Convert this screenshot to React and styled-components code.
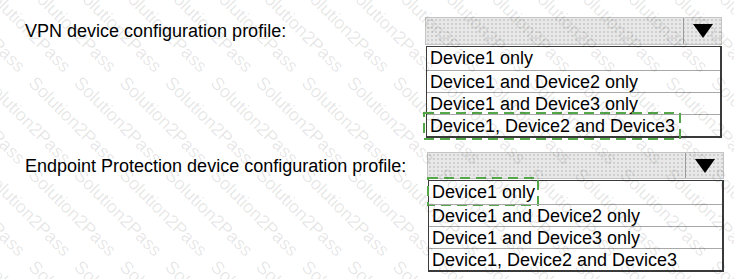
import React from "react";
import styled, { createGlobalStyle } from "styled-components";

const GlobalStyle = createGlobalStyle`
  html, body {
    margin: 0;
    padding: 0;
    background: #ffffff;
  }
  body {
    font-family: "Liberation Sans", Arial, sans-serif;
    color: #000000;
  }
`;

const Page = styled.div`
  position: relative;
  width: 734px;
  height: 279px;
  overflow: hidden;
  padding: 17px 0 0 25px;
  box-sizing: border-box;
  display: flex;
  flex-direction: column;
  gap: 14px;
`;

const Question = styled.div`
  display: grid;
  grid-template-columns: ${(p) => p.$labelWidth}px 297px;
  align-items: start;
`;

const Label = styled.div`
  font-size: 18px;
  line-height: 29px;
  white-space: nowrap;
`;

const Dropdown = styled.div`
  display: flex;
  flex-direction: column;
`;

const Header = styled.div`
  display: flex;
  height: ${(p) => p.$height}px;
  box-sizing: border-box;
  border: 1px solid #c4c4c4;
  background-color: #e8e8e8;
  background-image: radial-gradient(#c2c2c2 0.6px, transparent 0.9px);
  background-size: 4px 4px;
`;

const HeaderField = styled.div`
  flex: 1;
`;

const ArrowBox = styled.div`
  width: 37px;
  border-left: 1px solid #9a9a9a;
  display: flex;
  align-items: center;
  justify-content: center;
`;

const Options = styled.ul`
  list-style: none;
  margin: 1px 0 0 ${(p) => p.$indent}px;
  padding: 0;
  background: #ffffff;
  border: 1px solid #3a3a3a;
  border-right-width: 2px;
  border-bottom-width: 2px;
`;

const Option = styled.li`
  position: relative;
  line-height: 22px;
  font-size: 18px;
  padding-left: 3px;
  white-space: nowrap;
  border-top: ${(p) => (p.$first ? "none" : "1px solid #a8a8a8")};
  height: ${(p) => (p.$first ? 23 : 21)}px;
`;

const Highlight = styled.svg`
  position: absolute;
  left: ${(p) => p.$left}px;
  top: ${(p) => p.$top}px;
  overflow: visible;
  pointer-events: none;
`;

const Watermark = styled.svg`
  position: absolute;
  left: 0;
  top: 0;
  pointer-events: none;
`;

const Arrow = () => (
  <svg width="20" height="14" viewBox="0 0 20 14">
    <polygon points="0,0 20,0 10,14" fill="#000" />
  </svg>
);

const DashBox = ({ left, top, width, height }) => (
  <Highlight $left={left} $top={top} width={width} height={height}>
    <rect
      x="1"
      y="1"
      width={width - 2}
      height={height - 2}
      fill="none"
      stroke="#55a84a"
      strokeWidth="2"
      strokeDasharray="10 6"
    />
  </Highlight>
);

const options = [
  "Device1 only",
  "Device1 and Device2 only",
  "Device1 and Device3 only",
  "Device1, Device2 and Device3",
];

const questions = [
  {
    label: "VPN device configuration profile:",
    labelWidth: 400,
    header: 28,
    indent: 1,
    answer: 3,
    box: { left: -4, top: -3, width: 258, height: 28 },
  },
  {
    label: "Endpoint Protection device configuration profile:",
    labelWidth: 402,
    header: 27,
    indent: 1,
    answer: 0,
    box: { left: -2, top: -4, width: 112, height: 29 },
  },
];

// light diagonal "Solution2Pass" watermark laid over the whole picture
function WatermarkLayer() {
  const items = [];
  for (let y = -100; y < 320; y += 92) {
    for (let x = -200; x < 760; x += 45.5) {
      items.push(
        <text
          key={x + "_" + y}
          x={x}
          y={y}
          transform={`rotate(45 ${x} ${y})`}
          fontFamily="Liberation Sans, Arial, sans-serif"
          fontSize="18"
          fill="rgba(0,0,0,0.1)"
        >
          Solution2Pass
        </text>
      );
    }
  }
  return (
    <Watermark width="734" height="279">
      {items}
    </Watermark>
  );
}

export default function App() {
  return (
    <>
      <GlobalStyle />
      <Page>
        {questions.map((q) => (
          <Question key={q.label} $labelWidth={q.labelWidth}>
            <Label>{q.label}</Label>
            <Dropdown>
              <Header $height={q.header}>
                <HeaderField />
                <ArrowBox>
                  <Arrow />
                </ArrowBox>
              </Header>
              <Options $indent={q.indent}>
                {options.map((o, i) => (
                  <Option key={o} $first={i === 0}>
                    {o}
                    {i === q.answer && <DashBox {...q.box} />}
                  </Option>
                ))}
              </Options>
            </Dropdown>
          </Question>
        ))}
        <WatermarkLayer />
      </Page>
    </>
  );
}
